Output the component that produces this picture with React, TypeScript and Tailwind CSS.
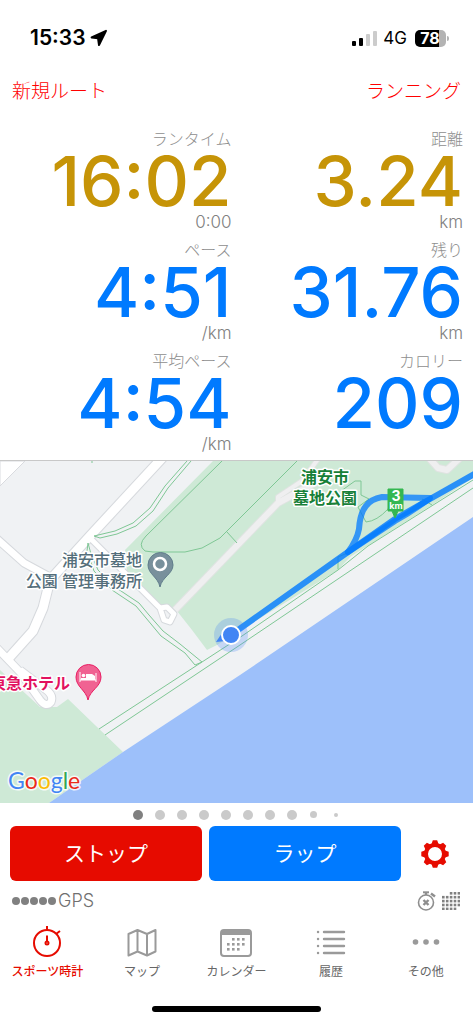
import React from "react";

const metrics = [
  { label: "ランタイム", value: "16:02", unit: "0:00", gold: true },
  { label: "距離", value: "3.24", unit: "km", gold: true },
  { label: "ペース", value: "4:51", unit: "/km", gold: false },
  { label: "残り", value: "31.76", unit: "km", gold: false },
  { label: "平均ペース", value: "4:54", unit: "/km", gold: false },
  { label: "カロリー", value: "209", unit: "", gold: false },
];

const StatusBar = () => (
  <div className="flex items-center justify-between pt-[26px] pl-[30px] pr-6">
    <div className="flex items-center gap-1 text-[21px] leading-6 font-semibold">
      15:33
      <svg width="18" height="18" viewBox="0 0 18 18">
        <path
          d="M16 1.8 L1.6 8.4 L8 9.2 L9 16 Z"
          fill="#000"
          stroke="#000"
          strokeWidth="2"
          strokeLinejoin="round"
        />
      </svg>
    </div>
    <div className="flex items-center gap-2">
      <div className="flex items-center gap-[6px]">
        <div className="flex items-end gap-[3px]">
          <div className="h-[5px] w-1 rounded-[1px] bg-black" />
          <div className="h-2 w-1 rounded-[1px] bg-black" />
          <div className="h-3 w-1 rounded-[1px] bg-[#cccccc]" />
          <div className="h-[15px] w-1 rounded-[1px] bg-[#cccccc]" />
        </div>
        <div className="text-[17px] leading-6">4G</div>
      </div>
      <div className="flex items-center gap-px">
        <div className="flex h-[17px] w-[31px] items-center justify-center rounded-[5px] bg-[linear-gradient(90deg,#000_78%,#b3b3b3_78%)] pr-px text-[16px] leading-4 font-bold text-white">
          78
        </div>
        <div className="h-[5px] w-0.5 rounded-r bg-[#b3b3b3]" />
      </div>
    </div>
  </div>
);

const RouteMap = () => (
  <svg
    className="block h-[342px] w-full"
    viewBox="0 0 473 342"
    preserveAspectRatio="xMidYMid slice"
    role="img"
    aria-label="マップ"
  >
    <rect width="473" height="342" fill="#f0f2f4" />
    <path d="M0 0 H25 L0 25 Z" fill="#fff" stroke="#d9dbdf" />

    {/* parks and sea */}
    <path
      d="M213 0 L125 89 L127 110 L157 144 L177 150 L192 169 L207 189 L217 184 L338 109 L350 96 L432 44 L473 17 V0 Z"
      fill="#cee9d6"
    />
    <path d="M0 209 L40 246 L57 246 L68 238 L123 291 L49 342 H0 Z" fill="#cee9d6" />
    <path d="M473 56 L302 172 L240 214 L123 291 L49 342 H473 Z" fill="#9dc0fa" />

    {/* park roads */}
    <g fill="none" stroke="#dfe3e1" strokeWidth="8" strokeLinejoin="round">
      <path d="M175 149 L278 42 L322 18" />
      <path d="M278 42 V36 L302 20 L318 -2" strokeWidth="6" />
      <path d="M429 -3 L438 7 L447 9 L462 -5" />
    </g>
    <g fill="none" stroke="#efeff0" strokeWidth="6" strokeLinejoin="round">
      <path d="M175 149 L278 42 L322 18" />
      <path d="M278 42 V36 L302 20 L318 -2" strokeWidth="4" />
      <path d="M429 -3 L438 7 L447 9 L462 -5" />
    </g>

    {/* streets */}
    <g fill="none" stroke="#d6d9dd" strokeLinejoin="round">
      <path d="M164 -5 L90 75 L50 119 L43 147 L33 170 L7 199" strokeWidth="11" />
      <path d="M-4 77 L24 102 L48 115" strokeWidth="9" />
      <path d="M90 77 L130 117 L160 147 L164 159 L170 161 L174 153 L167 146 L160 147" strokeWidth="7" />
      <path d="M-4 186 L20 211 L40 239 Q46 247 51 241 Q54 234 45 228 L20 209" strokeWidth="9" />
    </g>
    <g fill="none" stroke="#fff" strokeLinejoin="round">
      <path d="M164 -5 L90 75 L50 119 L43 147 L33 170 L7 199" strokeWidth="9" />
      <path d="M-4 77 L24 102 L48 115" strokeWidth="7" />
      <path d="M90 77 L130 117 L160 147 L164 159 L170 161 L174 153 L167 146 L160 147" strokeWidth="5" />
      <path d="M-4 186 L20 211 L40 239 Q46 247 51 241 Q54 234 45 228 L20 209" strokeWidth="7" />
    </g>

    {/* footpaths */}
    <g fill="none" stroke="#7fc795" strokeWidth="1">
      <path d="M187 0 L165 25 L150 47 L133 62 L115 70 L94 75 L100 77 L117 73 L136 65 L153 50 L168 27 L191 0" />
      <path d="M222 0 L146 75 Q137 84 145 90 L153 91 L185 91 L202 87 L220 77 L235 62 L297 0" />
      <path d="M227 71 L237 82" />
      <path d="M88 82 L87 90 L94 110 L112 129 L136 145 L146 157 L161 175 L185 192 L195 204 L202 201 L180 183 L163 170 L149 154 L139 142 L115 126 L98 109 L91 93 Z" />
      <path d="M99 268 L202 201 L242 175 L338 109 L368 85 L473 19" />
      <path d="M105 274 L240 184 L473 27" />
      <path d="M92 0 V2" />
      <path d="M338 108 V96 L350 91" />
      <path d="M341 30 L355 20 H361 V34 L369 38 L358 46 L366 61 Q377 60 388 48 L392 40" />
      <path d="M422 38 L432 44" />
    </g>

    {/* recorded route */}
    <g fill="none" stroke="#0079ff" strokeWidth="6" strokeLinecap="round" strokeLinejoin="round">
      <path d="M231 174 L348 91 L395 58 L430 38 L478 11" strokeOpacity="0.8" />
      <path
        d="M348 91 Q357 79 359 68 Q360 52 366 45 Q371 38 382 36 L430 37 Q413 50 395 60 L348 91"
        strokeOpacity="0.75"
      />
    </g>

    <path d="M388 28 H403 V50 H398 L395 57 L392 50 H388 Z" fill="#34b751" stroke="#34b751" strokeLinejoin="round" />
    <g fill="#fff" fontWeight="700" textAnchor="middle">
      <text x="396" y="40" fontSize="14">3</text>
      <text x="396" y="48" fontSize="9">km</text>
    </g>

    {/* current position */}
    <circle cx="231" cy="174" r="17" fill="#4285f4" fillOpacity="0.25" />
    <path d="M222 172 L216 181 L226 180 Z" fill="#4285f4" />
    <circle cx="231" cy="174" r="9" fill="#4285f4" stroke="#fff" strokeWidth="2" />

    <path
      d="M160 126 C158 116 148 113 148 104 A12.5 12.5 0 0 1 173 104 C173 113 162 116 160 126 Z"
      fill="#78909c"
      stroke="#607d8b"
    />
    <circle cx="160" cy="103" r="6" fill="none" stroke="#fff" strokeWidth="2.5" />
    <path
      d="M88 239 C86 229 76 226 76 216 A12.5 12.5 0 0 1 101 216 C101 226 90 229 88 239 Z"
      fill="#f06292"
      stroke="#e91e63"
    />
    <path d="M80 211 V221 M80 219 H96 M96 221 V212" fill="none" stroke="#fff" />
    <path d="M86 217 V213 H92 L95 215 V217 Z" fill="#fff" />
    <path d="M81 218 H95" stroke="#fff" strokeWidth="2" />
    <circle cx="83.5" cy="214.5" r="1.8" fill="#fff" />

    <g stroke="#fff" strokeWidth="3" strokeLinejoin="round" paintOrder="stroke">
      <g fill="#188038" fontSize="16" fontWeight="700" textAnchor="middle">
        <text x="325" y="22">浦安市</text>
        <text x="325" y="43">墓地公園</text>
      </g>
      <g fill="#546e7a" fontSize="16" fontWeight="500" textAnchor="end">
        <text x="142" y="105">浦安市墓地</text>
        <text x="142" y="126">公園 管理事務所</text>
      </g>
      <text x="70" y="228" fill="#e2125f" fontSize="16" fontWeight="700" textAnchor="end">
        東急ホテル
      </text>
      <text x="8" y="328" className="font-['Lato',sans-serif]" fontSize="23" strokeOpacity="0.8">
        <tspan fill="#4285f4">G</tspan>
        <tspan fill="#ea2a1c">o</tspan>
        <tspan fill="#fbbc05">o</tspan>
        <tspan fill="#4285f4">g</tspan>
        <tspan fill="#34a853">l</tspan>
        <tspan fill="#ea2a1c">e</tspan>
      </text>
    </g>
  </svg>
);

const GearIcon = () => (
  <svg width="28" height="28" viewBox="0 0 28 28" fill="#e60b00">
    <circle cx="14" cy="14" r="9" fill="none" stroke="#e60b00" strokeWidth="4" />
    {[0, 45, 90, 135, 180, 225, 270, 315].map((angle) => (
      <path key={angle} d="M10.5 4 L11.8 0.3 H16.2 L17.5 4 Z" transform={`rotate(${angle} 14 14)`} />
    ))}
  </svg>
);

const AutoPauseIcon = () => (
  <svg width="20" height="20" viewBox="0 0 20 20" fill="none" stroke="#8e8e8e">
    <circle cx="9" cy="11.5" r="7.5" strokeWidth="1.6" />
    <path d="M6 1.3 H12" strokeWidth="2" />
    <path d="M9 1 V4" strokeWidth="2.4" />
    <path d="M14 2.5 L18 5.5" strokeWidth="2.4" />
    <path d="M6.5 9 L11.5 14 M11.5 9 L6.5 14" strokeWidth="2.4" />
  </svg>
);

const GridIcon = () => (
  <svg width="18" height="18" viewBox="0 0 18 18" fill="#808080">
    {[
      [2, 3, 4],
      [0, 1, 2, 3, 4],
      [0, 1, 2, 3, 4],
      [0, 1, 2, 3, 4],
      [0, 1, 2, 3],
    ].map((row, y) =>
      row.map((x) => <rect key={`${x}-${y}`} x={x * 3.9} y={y * 3.9} width="2.6" height="2.6" />)
    )}
  </svg>
);

const StopwatchIcon = () => (
  <svg width="32" height="32" viewBox="0 0 32 32" fill="none" stroke="#e60b00" strokeWidth="2">
    <circle cx="16" cy="18" r="13" />
    <path d="M16 1 V6 M25 9 L29 6" />
    <path d="M16 10.5 V16" />
    <circle cx="16" cy="18" r="1.5" />
  </svg>
);

const MapIcon = () => (
  <svg width="32" height="32" viewBox="0 0 32 32" fill="none" stroke="#9a9a9a" strokeWidth="2" strokeLinejoin="round">
    <path d="M2.5 9 L11.5 5 L21 9 L29.5 5 V26.5 L21 30.5 L11.5 26.5 L2.5 30.5 Z M11.5 5 V26.5 M21 9 V30.5" />
  </svg>
);

const CalendarIcon = () => (
  <svg width="32" height="32" viewBox="0 0 32 32" fill="#9a9a9a">
    <rect x="1" y="5" width="30" height="26" rx="3" fill="none" stroke="#9a9a9a" strokeWidth="2" />
    <rect x="1" y="5" width="30" height="5" />
    {[
      [1, 2, 3],
      [0, 1, 2, 3],
      [0, 1, 2],
    ].map((row, y) =>
      row.map((x) => <rect key={`${x}-${y}`} x={x * 5 + 7} y={y * 5 + 13} width="2.6" height="2.6" />)
    )}
  </svg>
);

const ListIcon = () => (
  <svg width="32" height="32" viewBox="0 0 32 32" stroke="#9a9a9a" strokeWidth="2.4" strokeLinecap="round">
    {[7, 14, 21, 28].map((y) => (
      <path key={y} d={`M3 ${y} H3.1 M9 ${y} H29`} />
    ))}
  </svg>
);

const MoreIcon = () => (
  <svg width="32" height="32" viewBox="0 0 32 32" fill="#9a9a9a">
    <circle cx="5.5" cy="17" r="2.8" />
    <circle cx="16" cy="17" r="2.8" />
    <circle cx="26.5" cy="17" r="2.8" />
  </svg>
);

const tabs = [
  { label: "スポーツ時計", icon: <StopwatchIcon />, active: true },
  { label: "マップ", icon: <MapIcon />, active: false },
  { label: "カレンダー", icon: <CalendarIcon />, active: false },
  { label: "履歴", icon: <ListIcon />, active: false },
  { label: "その他", icon: <MoreIcon />, active: false },
];

const App = () => {
  return (
    <div className="flex w-full flex-col bg-white font-['Inter','Noto_Sans_CJK_JP',sans-serif] text-black">
      <StatusBar />
      <div className="flex items-center justify-between px-3 pt-[29px] pb-[23px] text-[19px] leading-[26px] font-light text-[#ff0000]">
        <button>新規ルート</button>
        <button>ランニング</button>
      </div>

      <div className="grid grid-cols-2 text-right">
        {metrics.map((item) => (
          <div key={item.label} className="h-[111px] pr-[5px] even:pr-[10px]">
            <div className="text-[16px] leading-[22px] font-light text-[#8e8e8e]">{item.label}</div>
            <div
              className={
                item.gold
                  ? "text-[69px] leading-[62px] font-medium text-[#c69407]"
                  : "text-[69px] leading-[62px] font-medium text-[#007aff]"
              }
            >
              {item.value}
            </div>
            <div className="text-[17px] leading-[20px] font-light text-[#808080]">{item.unit}</div>
          </div>
        ))}
      </div>

      <div className="-mt-px border-t border-[#c8c8c8]">
        <RouteMap />
      </div>

      <div className="flex h-[23px] items-center justify-center gap-3">
        <div className="size-[10px] rounded-full bg-[#808080]" />
        {[1, 2, 3, 4, 5, 6, 7].map((page) => (
          <div key={page} className="size-[10px] rounded-full bg-[#cacaca]" />
        ))}
        <div className="flex w-[10px] justify-center">
          <div className="size-[7px] rounded-full bg-[#cacaca]" />
        </div>
        <div className="flex w-[10px] justify-center">
          <div className="size-1 rounded-full bg-[#cacaca]" />
        </div>
      </div>

      <div className="flex items-center gap-[7px] pl-[10px] text-[21px] text-white">
        <button className="h-[55px] flex-1 rounded-md bg-[#e60b00]">ストップ</button>
        <button className="h-[55px] flex-1 rounded-md bg-[#007aff]">ラップ</button>
        <button aria-label="設定" className="flex w-[65px] justify-center pr-3">
          <GearIcon />
        </button>
      </div>

      <div className="flex h-[39px] items-center justify-between pr-[13px] pl-3">
        <div className="flex items-center gap-[2px] text-[18px] leading-6 font-light text-[#707070]">
          <div className="flex items-center gap-px">
            {[0, 1, 2, 3, 4].map((dot) => (
              <div key={dot} className="size-2 rounded-full bg-[#808080]" />
            ))}
          </div>
          GPS
        </div>
        <div className="flex items-center gap-[5px]">
          <AutoPauseIcon />
          <GridIcon />
        </div>
      </div>

      <nav className="grid grid-cols-5 pt-[5px]">
        {tabs.map((tab) => (
          <button
            key={tab.label}
            className={
              tab.active
                ? "flex flex-col items-center gap-[6px] text-[12px] leading-[18px] font-medium text-[#e60b00]"
                : "flex flex-col items-center gap-[6px] text-[12px] leading-[18px] text-[#666666]"
            }
          >
            {tab.icon}
            {tab.label}
          </button>
        ))}
      </nav>
      <div className="flex justify-center pt-[25px] pb-[10px]">
        <div className="h-[6px] w-[169px] rounded-full bg-black" />
      </div>
    </div>
  );
};

export default App;
